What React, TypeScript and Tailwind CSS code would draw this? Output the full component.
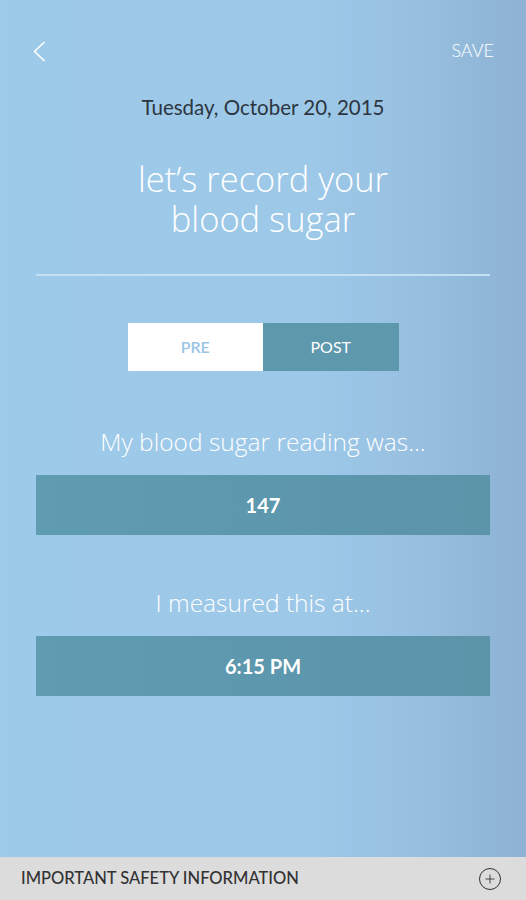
import { Plus } from "lucide-react";

const App = () => {
  return (
    <div
      className="relative w-[526px] h-[900px] overflow-hidden flex flex-col bg-[linear-gradient(90deg,#9ecae9_0%,#9dc8e8_60%,#97bfe0_80%,#8db2d3_100%)]"
      style={{ fontFamily: "Lato, 'Open Sans', sans-serif" }}
    >
      {/* Top bar */}
      <div className="flex items-center justify-between pl-[33px] pr-[32px] pt-[40px] h-[61px]">
        <svg width="13" height="21" viewBox="0 0 13 21" className="mt-[1px]">
          <path d="M11.5 1 L1.5 10.5 L11.5 20" fill="none" stroke="white" strokeWidth="1.6" />
        </svg>
        <span className="text-[18px] text-white leading-none mt-[-2px] font-light">SAVE</span>
      </div>

      {/* Date */}
      <div className="mt-[34px] text-center text-[20.5px] leading-[24px] text-[#2c3640]">
        Tuesday, October 20, 2015
      </div>

      {/* Title */}
      <h1
        className="mt-[40px] text-center text-[34.5px] leading-[40px] text-white font-light"
        style={{ fontFamily: "'Open Sans', Lato, sans-serif" }}
      >
        let’s record your
        <br />
        blood sugar
      </h1>

      {/* Divider */}
      <div className="mx-[36px] mt-[35px] h-[2px] bg-[#c4e1f4]" />

      {/* Toggle */}
      <div className="mt-[47px] flex justify-center">
        <div className="flex w-[271px] h-[48px]">
          <button className="flex-1 bg-white text-[16px] text-[#9ac5e5] font-semibold">PRE</button>
          <button className="flex-1 bg-[#5e98ad] text-[16px] text-white">POST</button>
        </div>
      </div>

      {/* Reading */}
      <p
        className="mt-[55px] text-center text-[24.5px] leading-[32px] text-white font-light"
        style={{ fontFamily: "'Open Sans', Lato, sans-serif" }}
      >
        My blood sugar reading was...
      </p>
      <div className="mx-[36px] mt-[17px] h-[60px] flex items-center justify-center bg-[linear-gradient(90deg,#5f9bb1,#5c94aa)] text-white text-[20px] font-bold">
        147
      </div>

      {/* Time */}
      <p
        className="mt-[52px] text-center text-[24.5px] leading-[32px] text-white font-light"
        style={{ fontFamily: "'Open Sans', Lato, sans-serif" }}
      >
        I measured this at...
      </p>
      <div className="mx-[36px] mt-[17px] h-[60px] flex items-center justify-center bg-[linear-gradient(90deg,#5f9bb1,#5c94aa)] text-white text-[20px] font-bold">
        6:15 PM
      </div>

      <div className="flex-1" />

      {/* Footer */}
      <div className="h-[43px] bg-[#dcdcdc] flex items-center justify-between pl-[21px] pr-[25px]">
        <span className="text-[16.5px] font-medium text-[#333333]">IMPORTANT SAFETY INFORMATION</span>
        <div className="w-[22px] h-[22px] rounded-full border-[1.5px] border-[#333333] flex items-center justify-center">
          <Plus size={14} strokeWidth={1.5} color="#333333" />
        </div>
      </div>
    </div>
  );
};

export default App;
